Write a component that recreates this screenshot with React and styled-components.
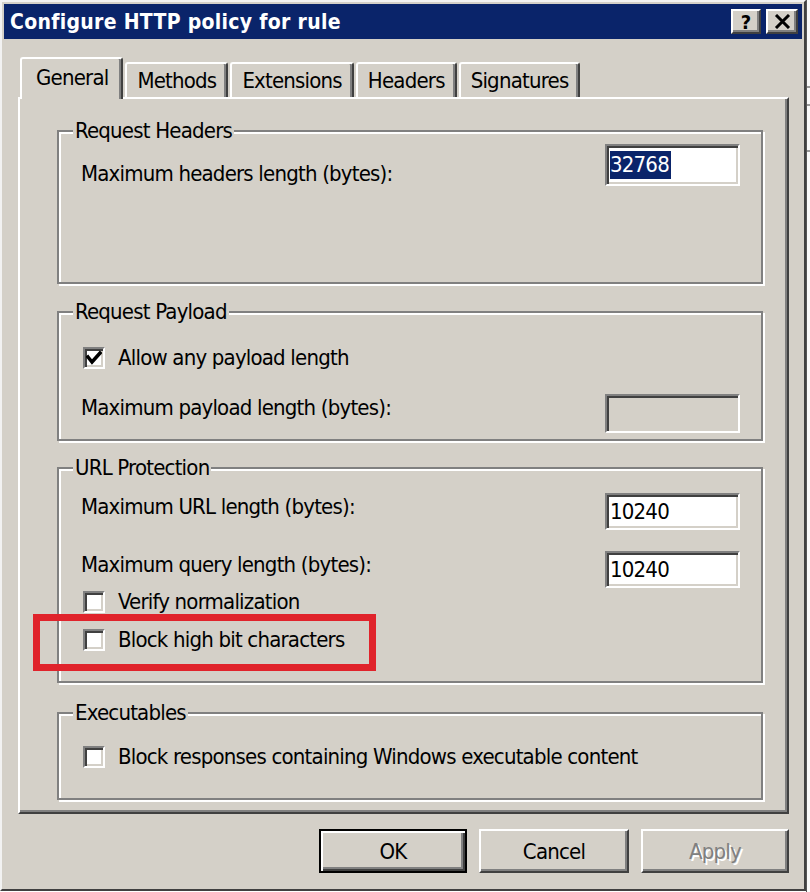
import React from "react";
import styled, { createGlobalStyle } from "styled-components";

const face = "#d4d0c8";
const shadow = "#808080";
const dark = "#404040";

const GlobalStyle = createGlobalStyle`
  body {
    margin: 0;
    background: #ffffff;
    font-family: "DejaVu Sans Condensed", "DejaVu Sans", "Liberation Sans", sans-serif;
    font-stretch: semi-condensed;
  }
`;

const Screen = styled.div`
  display: flex;
  height: 892px;
  overflow: hidden;
`;

const Window = styled.div`
  box-sizing: border-box;
  width: 806px;
  height: 891px;
  flex-shrink: 0;
  padding: 2px;
  background: ${face};
  border-top: 2px solid #f2f2f2;
  border-left: 2px solid #f2f2f2;
  border-right: 2px solid ${dark};
  border-bottom: 2px solid ${dark};
  display: flex;
  flex-direction: column;
`;

const Backdrop = styled.div`
  flex: 1;
  background: #fafafa;
  border-left: 1px solid #555;
  background-image: linear-gradient(#999 0 0), linear-gradient(#999 0 0),
    linear-gradient(#999 0 0);
  background-size: 100% 2px;
  background-repeat: no-repeat;
  background-position: 0 86px, 0 104px, 0 150px;
`;

const TitleBar = styled.div`
  height: 35px;
  flex-shrink: 0;
  background: #0a246a;
  display: flex;
  align-items: center;
  justify-content: space-between;
  padding: 0 4px 0 6px;
`;

const TitleText = styled.span`
  color: #ffffff;
  font-weight: bold;
  font-size: 21px;
  letter-spacing: 0.3px;
`;

const CaptionButtons = styled.div`
  display: flex;
  gap: 5px;
`;

const CaptionButton = styled.div`
  box-sizing: border-box;
  width: ${(p) => p.$w}px;
  height: 25px;
  background: ${face};
  border: 2px solid;
  border-color: #fff ${dark} ${dark} #fff;
  box-shadow: inset -2px -2px 0 ${shadow};
  display: flex;
  align-items: center;
  justify-content: center;
  font-family: "DejaVu Sans", sans-serif;
  font-weight: bold;
  font-size: 20px;
  color: #000;
`;

const Body = styled.div`
  flex: 1;
  padding: 18px 13px 0 14px;
  display: flex;
  flex-direction: column;
`;

const TabStrip = styled.div`
  display: flex;
  align-items: flex-end;
  height: 42px;
  margin-bottom: -2px;
  position: relative;
  z-index: 1;
`;

const Tab = styled.div`
  box-sizing: border-box;
  height: ${(p) => (p.$active ? 42 : 35)}px;
  margin-bottom: ${(p) => (p.$active ? 0 : 2)}px;
  margin-left: ${(p) => (p.$active ? 2 : 2)}px;
  padding: ${(p) => (p.$active ? "0 13px 3px 14px" : "0 10px")};
  background: ${face};
  border-top: 2px solid #fff;
  border-left: 2px solid #fff;
  border-right: 2px solid ${dark};
  border-top-left-radius: 3px;
  border-top-right-radius: 3px;
  box-shadow: inset -2px 0 0 ${shadow};
  display: flex;
  align-items: center;
  font-size: 22px;
  letter-spacing: -0.8px;
  color: #000;
`;

const Panel = styled.div`
  box-sizing: border-box;
  height: 717px;
  border-top: 2px solid #fff;
  border-left: 2px solid #fff;
  border-right: 2px solid ${dark};
  border-bottom: 2px solid ${dark};
  box-shadow: inset -2px -2px 0 ${shadow};
  padding: 20px 24px 0 37px;
  display: flex;
  flex-direction: column;
`;

const GroupBox = styled.fieldset`
  box-sizing: border-box;
  margin: ${(p) => p.$gap}px 0 0 0;
  padding: 0 21px 0 22px;
  min-width: 0;
  height: ${(p) => p.$h}px;
  border: 2px solid ${shadow};
  box-shadow: 2px 2px 0 #fff, inset 2px 2px 0 #fff;
  display: flex;
  flex-direction: column;
`;

const Caption = styled.legend`
  margin-left: -8px;
  padding: 0 2px;
  background: ${face};
  font-size: 22px;
  line-height: 24px;
  letter-spacing: -0.8px;
  color: #000;
`;

const FieldRow = styled.div`
  display: flex;
  justify-content: space-between;
  align-items: flex-start;
  margin-top: ${(p) => p.$top}px;
`;

const Label = styled.span`
  margin-top: ${(p) => p.$offset}px;
  font-size: 22px;
  line-height: 24px;
  letter-spacing: -0.8px;
  color: #000;
`;

const TextBox = styled.div`
  box-sizing: border-box;
  width: 135px;
  height: ${(p) => p.$h}px;
  padding: 0 3px;
  background: ${(p) => (p.$disabled ? face : "#fff")};
  border: 2px solid;
  border-color: ${shadow} #fff #fff ${shadow};
  box-shadow: inset 2px 2px 0 ${dark}, inset -2px -2px 0 ${face};
  display: flex;
  align-items: center;
  font-size: 22px;
  letter-spacing: -0.8px;
  color: #000;
`;

const Selection = styled.span`
  background: #0a246a;
  color: #fff;
  line-height: 28px;
  padding-right: 2px;
`;

const CheckRow = styled.div`
  position: relative;
  display: flex;
  align-items: center;
  gap: 13px;
  height: 24px;
  margin-top: ${(p) => p.$top}px;
  padding-left: 2px;
`;

const CheckBox = styled.span`
  box-sizing: border-box;
  width: 22px;
  height: 22px;
  flex-shrink: 0;
  background: #fff;
  border: 2px solid;
  border-color: ${shadow} #fff #fff ${shadow};
  box-shadow: inset 2px 2px 0 ${dark}, inset -2px -2px 0 ${face};
  display: flex;
  align-items: center;
  justify-content: center;
`;

const Highlight = styled.div`
  position: absolute;
  left: -48px;
  top: -14px;
  width: 343px;
  height: 57px;
  box-sizing: border-box;
  border: 7px solid #e0232b;
  pointer-events: none;
`;

const ButtonBar = styled.div`
  display: flex;
  justify-content: flex-end;
  gap: 12px;
  margin-top: 15px;
`;

const Button = styled.div`
  box-sizing: border-box;
  width: ${(p) => p.$w}px;
  height: 44px;
  background: ${face};
  border: 2px solid;
  border-color: ${(p) => (p.$default ? "#000" : `#fff ${dark} ${dark} #fff`)};
  box-shadow: ${(p) =>
    p.$default
      ? `inset 2px 2px 0 #fff, inset -2px -2px 0 ${dark}, inset -4px -4px 0 ${shadow}`
      : `inset -2px -2px 0 ${shadow}`};
  display: flex;
  align-items: center;
  justify-content: center;
  font-size: 22px;
  letter-spacing: -0.8px;
  color: ${(p) => (p.$disabled ? shadow : "#000")};
  text-shadow: ${(p) => (p.$disabled ? "2px 2px 0 #fff" : "none")};
`;

const Check = () => (
  <svg width="16" height="16" viewBox="0 0 16 16">
    <polyline points="2,7 6,12 14,3" fill="none" stroke="#000" strokeWidth="3.5" strokeLinecap="square" />
  </svg>
);

const CloseGlyph = () => (
  <svg width="17" height="15" viewBox="0 0 17 15">
    <path d="M2 1 L15 14 M15 1 L2 14" stroke="#000" strokeWidth="3" fill="none" />
  </svg>
);

const tabs = ["General", "Methods", "Extensions", "Headers", "Signatures"];

export default function App() {
  return (
    <Screen>
      <GlobalStyle />
      <Window>
        <TitleBar>
          <TitleText>Configure HTTP policy for rule</TitleText>
          <CaptionButtons>
            <CaptionButton $w={30}>?</CaptionButton>
            <CaptionButton $w={32}>
              <CloseGlyph />
            </CaptionButton>
          </CaptionButtons>
        </TitleBar>
        <Body>
          <TabStrip>
            {tabs.map((t, i) => (
              <Tab key={t} $active={i === 0}>
                {t}
              </Tab>
            ))}
          </TabStrip>
          <Panel>
            <GroupBox $gap={0} $h={165}>
              <Caption>Request Headers</Caption>
              <FieldRow $top={1}>
                <Label $offset={18}>Maximum headers length (bytes):</Label>
                <TextBox $h={42}>
                  <Selection>32768</Selection>
                </TextBox>
              </FieldRow>
            </GroupBox>

            <GroupBox $gap={16} $h={141}>
              <Caption>Request Payload</Caption>
              <CheckRow $top={22}>
                <CheckBox>
                  <Check />
                </CheckBox>
                <Label $offset={0}>Allow any payload length</Label>
              </CheckRow>
              <FieldRow $top={24}>
                <Label $offset={2}>Maximum payload length (bytes):</Label>
                <TextBox $h={39} $disabled />
              </FieldRow>
            </GroupBox>

            <GroupBox $gap={15} $h={227}>
              <Caption>URL Protection</Caption>
              <FieldRow $top={13}>
                <Label $offset={2}>Maximum URL length (bytes):</Label>
                <TextBox $h={37}>10240</TextBox>
              </FieldRow>
              <FieldRow $top={21}>
                <Label $offset={2}>Maximum query length (bytes):</Label>
                <TextBox $h={37}>10240</TextBox>
              </FieldRow>
              <CheckRow $top={2}>
                <CheckBox />
                <Label $offset={0}>Verify normalization</Label>
              </CheckRow>
              <CheckRow $top={14}>
                <CheckBox />
                <Label $offset={0}>Block high bit characters</Label>
                <Highlight />
              </CheckRow>
            </GroupBox>

            <GroupBox $gap={18} $h={99}>
              <Caption>Executables</Caption>
              <CheckRow $top={20}>
                <CheckBox />
                <Label $offset={0}>Block responses containing Windows executable content</Label>
              </CheckRow>
            </GroupBox>
          </Panel>
          <ButtonBar>
            <Button $w={148} $default>
              OK
            </Button>
            <Button $w={150}>Cancel</Button>
            <Button $w={148} $disabled>
              Apply
            </Button>
          </ButtonBar>
        </Body>
      </Window>
      <Backdrop />
    </Screen>
  );
}
